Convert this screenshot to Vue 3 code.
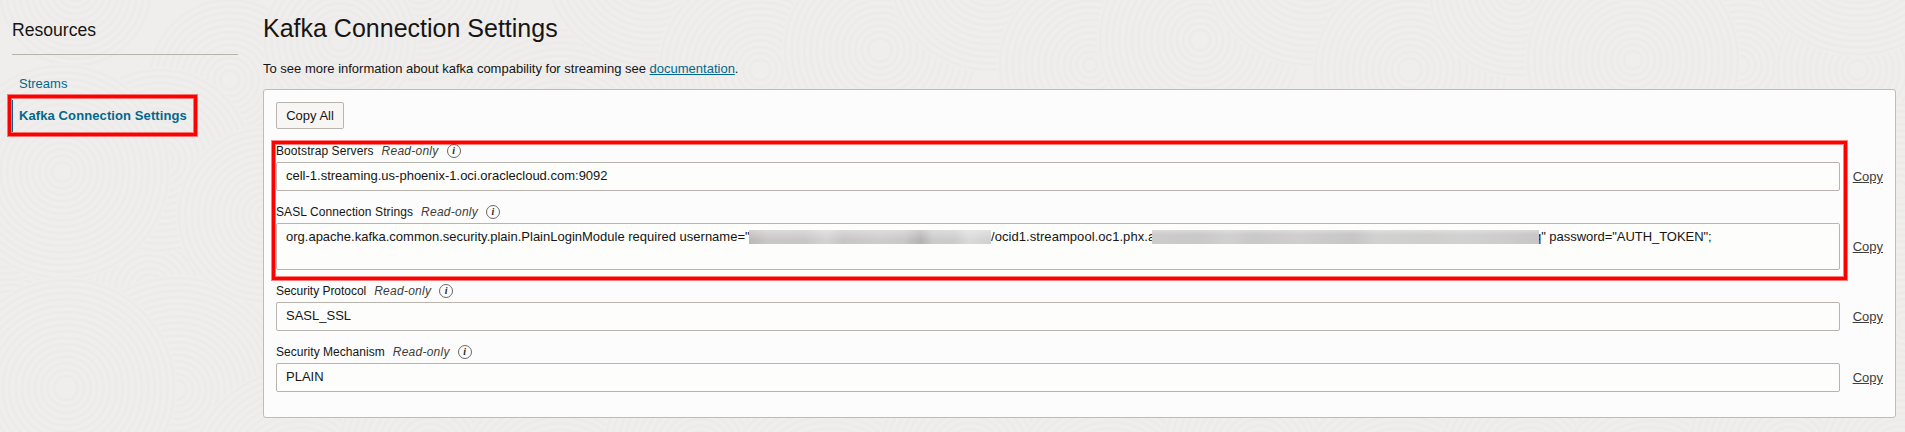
<script setup>
const discs = [
  [75, -10, 75], [560, 150, 120], [420, -20, 100], [230, 80, 80], [340, 40, 75],
  [650, -40, 105], [760, 70, 100], [880, 50, 95], [990, -30, 100], [1090, 65, 90],
  [1200, 40, 100], [1310, -40, 105], [1410, 70, 95], [1515, -10, 85], [1740, 0, 60],
  [1740, 65, 105], [1633, 60, 105], [1858, 70, 80], [1858, -58, 112],
  [10, 330, 90], [150, 290, 105], [160, 160, 90], [5, 210, 70], [62, 172, 106],
  [177, 390, 112], [66, 388, 108], [265, 215, 86], [300, 480, 110], [430, 450, 90],
  [560, 490, 105], [700, 450, 95], [830, 500, 110], [970, 455, 90], [1110, 490, 100],
  [1260, 450, 95], [1400, 500, 110], [1530, 460, 90], [1650, 490, 95], [1790, 450, 100],
  [1900, 190, 85], [1905, 325, 90], [1900, 455, 80],
].map(([x, y, r]) => ({
  x, y, r,
  rings: Array.from({ length: Math.floor(r / 6.4) }, (_, i) => r - i * 6.4),
}))

const fields = [
  { id: 'bootstrap', label: 'Bootstrap Servers', parts: [{ text: 'cell-1.streaming.us-phoenix-1.oci.oraclecloud.com:9092' }] },
  {
    id: 'sasl',
    label: 'SASL Connection Strings',
    tall: true,
    parts: [
      { text: 'org.apache.kafka.common.security.plain.PlainLoginModule required username="', cls: 'seg-login' },
      { mask: 'mask-user' },
      { text: '/ocid1.streampool.oc1.phx.a', cls: 'seg-pool' },
      { mask: 'mask-pool' },
      { text: 'q" password="AUTH_TOKEN";', cls: 'seg-end' },
    ],
  },
  { id: 'protocol', label: 'Security Protocol', parts: [{ text: 'SASL_SSL' }] },
  { id: 'mechanism', label: 'Security Mechanism', parts: [{ text: 'PLAIN' }] },
]
</script>

<template>
  <div class="page">
    <svg class="texture" width="1905" height="432" viewBox="0 0 1905 432" aria-hidden="true">
      <g v-for="(d, i) in discs" :key="i">
        <circle :cx="d.x" :cy="d.y" :r="d.r + 3" fill="#efeeec" />
        <circle v-for="r in d.rings" :key="r" :cx="d.x" :cy="d.y" :r="r" fill="none" stroke="#ecebe9" stroke-width="2.6" />
      </g>
    </svg>

    <aside class="sidebar">
      <h2>Resources</h2>
      <nav>
        <a class="item">Streams</a>
        <a class="item active">Kafka Connection Settings<span class="mark mark-nav"></span></a>
      </nav>
    </aside>

    <main class="main">
      <h1>Kafka Connection Settings</h1>
      <p class="intro">To see more information about kafka compability for streaming see <a>documentation</a>.</p>
      <section class="card">
        <button class="copy-all">Copy All</button>
        <div v-for="f in fields" :key="f.id" class="field">
          <div class="label">
            <span class="name" :class="f.id">{{ f.label }}</span>
            <em>Read-only</em>
            <span class="info">i</span>
          </div>
          <div class="row">
            <div class="value" :class="{ tall: f.tall }">
              <template v-for="(p, i) in f.parts" :key="i">
                <span v-if="p.mask" class="mask" :class="p.mask"></span>
                <span v-else class="seg" :class="p.cls">{{ p.text }}</span>
              </template>
            </div>
            <a class="copy">Copy</a>
          </div>
        </div>
        <span class="mark mark-fields"></span>
      </section>
    </main>
  </div>
</template>

<style>
body {
  margin: 0;
  background: #efeeec;
}
</style>

<style scoped>
.page {
  position: relative;
  display: flex;
  width: 1905px;
  height: 432px;
  overflow: hidden;
  box-sizing: border-box;
  background: #efeeec;
  color: #161513;
  font: 13px/15px "Liberation Sans", Arial, sans-serif;
}
.texture {
  position: absolute;
  inset: 0;
}
.sidebar {
  position: relative;
  width: 226px;
  margin-left: 12px;
  flex: none;
}
h2 {
  margin: 0;
  padding-top: 20px;
  height: 34px;
  border-bottom: 1px solid #b8b4aa;
  font-size: 17.6px;
  line-height: 20px;
  font-weight: 400;
}
nav {
  padding-top: 13px;
}
.item {
  position: relative;
  display: flex;
  align-items: center;
  box-sizing: border-box;
  width: max-content;
  height: 32px;
  padding: 0 0 2px 7px;
  color: #00688c;
}
.item.active {
  padding-left: 6px;
  border-left: 1px solid #00688c;
  font-weight: 700;
  letter-spacing: 0.1px;
}
.mark {
  position: absolute;
  box-sizing: border-box;
  border: 3px solid #f00;
  box-shadow: 0 0 0 1px rgba(255, 0, 0, 0.5), inset 0 0 0 1px rgba(255, 0, 0, 0.5);
  pointer-events: none;
}
.mark-nav {
  left: -5px;
  top: -5px;
  width: 189px;
  height: 41px;
}
.main {
  position: relative;
  width: 1633px;
  margin-left: 25px;
  flex: none;
}
h1 {
  margin: 0;
  padding-top: 14px;
  height: 47px;
  font-size: 25px;
  line-height: 28px;
  font-weight: 400;
}
.intro {
  margin: 0;
  height: 28px;
}
.intro a {
  color: #00688c;
  text-decoration: underline;
}
.card {
  position: relative;
  box-sizing: border-box;
  height: 329px;
  padding: 12px;
  border: 1px solid #b8bcc4;
  border-radius: 3px;
  background: #fcfcfc;
}
.copy-all {
  display: block;
  box-sizing: border-box;
  width: 68px;
  height: 27px;
  margin: 0 0 1px;
  padding: 0;
  border: 1px solid #b9b5ae;
  border-radius: 2px;
  background: #f7f6f5;
  color: #161513;
  font: inherit;
}
.field {
  padding-top: 14px;
}
.label {
  display: flex;
  align-items: center;
  gap: 8px;
  height: 14px;
  margin-bottom: 4px;
  font-size: 12px;
  line-height: 14px;
}
.bootstrap {
  letter-spacing: 0.09px;
}
.sasl {
  letter-spacing: 0.09px;
}
.protocol {
  letter-spacing: -0.03px;
}
.mechanism {
  letter-spacing: 0.04px;
}
.label em {
  color: #403e3a;
  letter-spacing: 0.25px;
}
.info {
  box-sizing: border-box;
  width: 14px;
  height: 14px;
  margin-top: -1px;
  border: 1px solid #6b6864;
  border-radius: 50%;
  color: #2b2926;
  font: italic 700 10px/11px "Liberation Serif", serif;
  text-align: center;
}
.row {
  display: flex;
  align-items: center;
  gap: 13px;
}
.value {
  display: flex;
  box-sizing: border-box;
  width: 1564px;
  height: 29px;
  padding: 5px 9px;
  border: 1px solid #b9b5ae;
  border-radius: 2px;
  background: #fdfdfb;
  white-space: pre;
}
.value.tall {
  height: 47px;
}
.seg {
  flex: none;
}
.seg-login {
  width: 463px;
}
.seg-pool {
  width: 161px;
  letter-spacing: 0.06px;
}
.seg-end {
  margin-left: -5px;
  letter-spacing: -0.04px;
}
.mask {
  position: relative;
  flex: none;
  height: 14px;
  margin-top: 1px;
}
.mask-user {
  width: 242px;
  background:
    linear-gradient(rgba(255, 255, 255, 0.38), rgba(255, 255, 255, 0.05) 70%),
    linear-gradient(90deg, #b8b6b5, #c6c4c4 8%, #c5c3c3 23%, #d2d0d0 32%, #c4c2c2 39%, #cbc9c9 54%, #c6c4c4 64%, #b1afaf 71%, #c9c7c8 76%, #cac9ca 85%, #d9d8d8 91%, #cfcece);
}
.mask-pool {
  width: 387px;
  background:
    linear-gradient(rgba(255, 255, 255, 0.4), rgba(255, 255, 255, 0.14) 35%),
    linear-gradient(90deg, #c5c3c3, #c1bfbf 12%, #cac8c8 20%, #c1bfbf 26%, #c8c6c6 38%, #c3c1c1 45%, #bebcbc 52%, #cbcaca 58%, #c7c6c5 72%, #cbcaca 80%, #c5c3c3 92%, #bebcbc);
}
.copy {
  color: #403e3a;
  text-decoration: underline;
}
.mark-fields {
  left: 8px;
  top: 51px;
  width: 1575px;
  height: 139px;
}
</style>
